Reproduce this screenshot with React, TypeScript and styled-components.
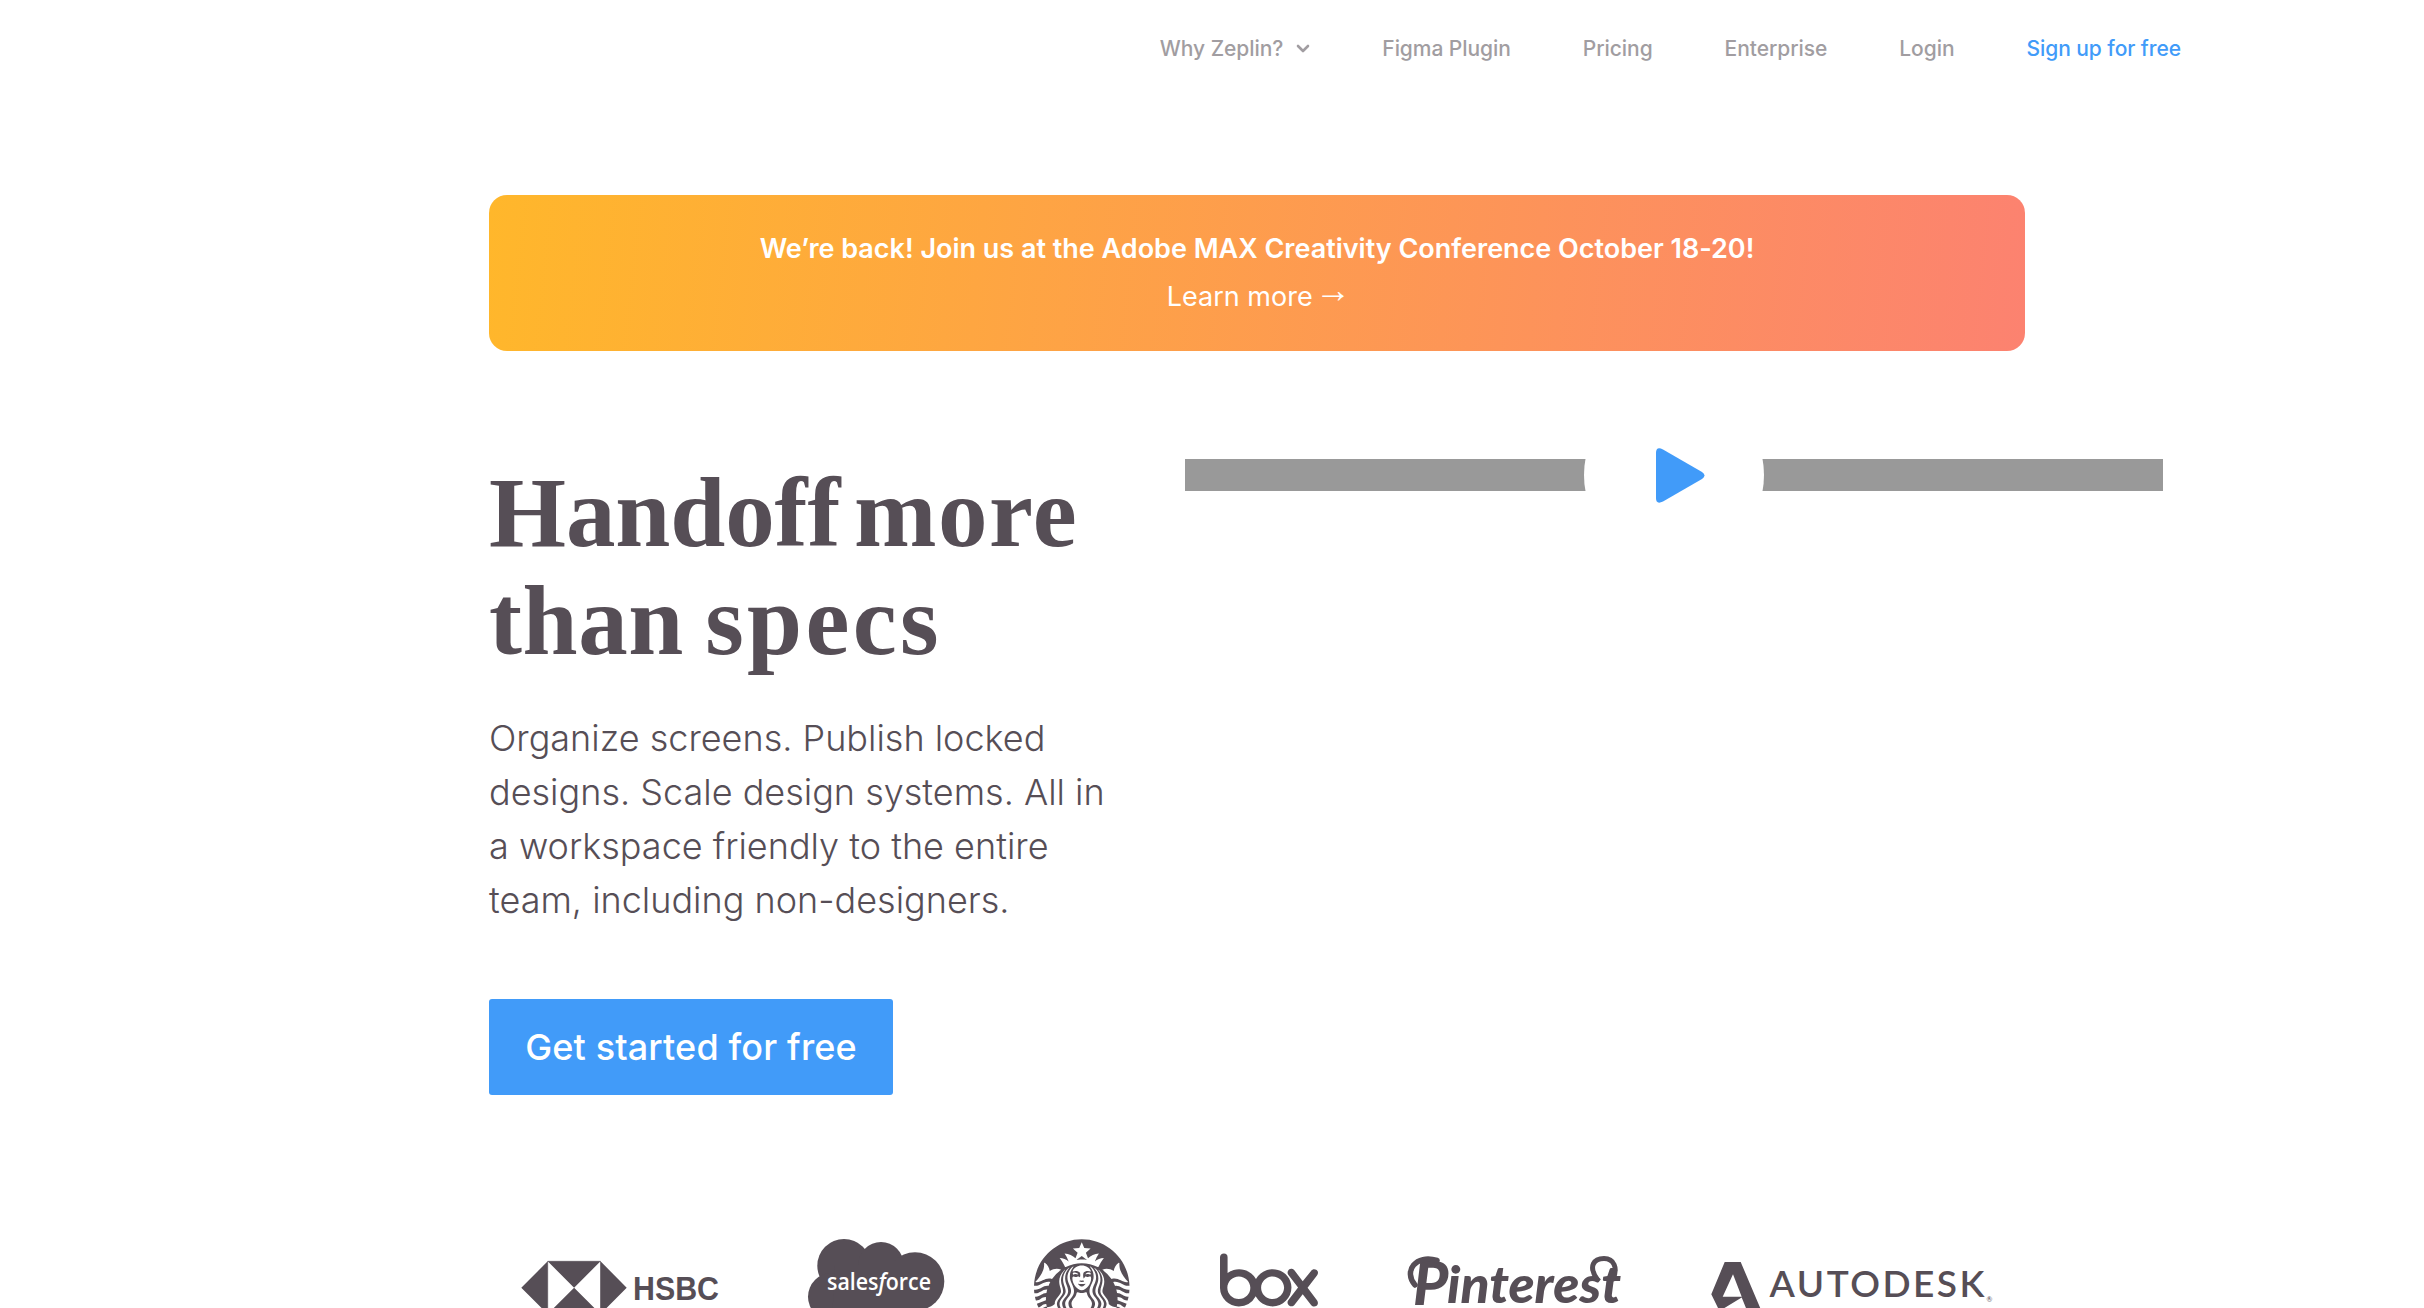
import React from "react";
import styled, { createGlobalStyle } from "styled-components";
import { SiBox, SiStarbucks } from "react-icons/si";

const INK = "#564e56";
const BLUE = "#419bf9";

const GlobalStyle = createGlobalStyle`
  * { box-sizing: border-box; }
  body { margin: 0; background: #fff; font-family: Inter, "Liberation Sans", sans-serif; }
  h1, p { margin: 0; }
  a { text-decoration: none; }
`;

const Page = styled.div`
  height: 1308px;
  overflow: hidden;
  display: flex;
  flex-direction: column;
`;

const Nav = styled.nav`
  height: 96px;
  padding: 2px 243px 0 0;
  display: flex;
  flex: none;
  justify-content: flex-end;
  align-items: center;
  gap: 72px;
`;

const NavLink = styled.a<{ $accent?: boolean }>`
  display: flex;
  align-items: center;
  gap: 13px;
  font-size: 21px;
  line-height: 30px;
  font-weight: 500;
  letter-spacing: -0.06px;
  white-space: nowrap;
  color: ${(p) => (p.$accent ? BLUE : "#a19da1")};
`;

const Chevron = styled.svg`
  width: 14px;
  height: 10px;
`;

const Banner = styled.a`
  margin: 99px 0 0 489px;
  width: 1536px;
  height: 156px;
  flex: none;
  border-radius: 18px;
  background: linear-gradient(96deg, #ffb72b, #fc8270);
  color: #fff;
  display: flex;
  flex-direction: column;
  align-items: center;
  padding-top: 30px;
  font-size: 27px;
  line-height: 48px;
`;

const BannerTitle = styled.span`
  font-weight: 600;
  letter-spacing: -0.01px;
`;

const BannerLink = styled.span`
  font-weight: 400;
`;

const Arrow = styled.span`
  display: inline-block;
  margin: 0 -4px 0 -5px;
  font-family: "Liberation Sans", sans-serif;
  font-size: 36px;
  line-height: 0;
  vertical-align: 4px;
`;

const Hero = styled.section`
  margin-top: 108px;
  padding-left: 489px;
  height: 772px;
  flex: none;
  display: flex;
  align-items: flex-start;
`;

const Copy = styled.div`
  width: 696px;
  flex: none;
`;

const Title = styled.h1`
  font-family: "Liberation Serif", serif;
  font-weight: 700;
  font-size: 99px;
  line-height: 108px;
  color: ${INK};
  white-space: nowrap;
`;

const TitleLine = styled.span<{ $gap: number }>`
  display: block;
  word-spacing: ${(p) => p.$gap}px;
`;

const Word = styled.span<{ $spacing: number }>`
  letter-spacing: ${(p) => p.$spacing}px;
`;

const Lead = styled.p`
  margin-top: 36px;
  width: 640px;
  font-size: 36px;
  line-height: 54px;
  font-weight: 300;
  color: ${INK};
`;

const Button = styled.a`
  margin-top: 72px;
  width: 404px;
  height: 96px;
  border-radius: 3px;
  background: ${BLUE};
  color: #fff;
  font-size: 36px;
  font-weight: 500;
  letter-spacing: 0.15px;
  display: flex;
  align-items: center;
  justify-content: center;
`;

const Video = styled.div`
  width: 978px;
  height: 32px;
  background: #999;
  display: flex;
  align-items: center;
  justify-content: center;
`;

const PlayButton = styled.div`
  width: 180px;
  height: 180px;
  flex: none;
  border-radius: 50%;
  background: #fff;
  display: flex;
  align-items: center;
  padding-left: 72px;
`;

const Logos = styled.section`
  height: 77px;
  padding-left: 521px;
  display: flex;
  align-items: flex-start;
  color: ${INK};
`;

const Logo = styled.div<{ $gap: number; $top: number }>`
  flex: none;
  margin-left: ${(p) => p.$gap}px;
  margin-top: ${(p) => p.$top}px;
  svg { display: block; fill: ${INK}; overflow: visible; }
`;

const links = ["Figma Plugin", "Pricing", "Enterprise", "Login"];

export default function App() {
  return (
    <>
      <GlobalStyle />
      <Page>
        <Nav>
          <NavLink>
            Why Zeplin?
            <Chevron viewBox="0 0 14 10">
              <path d="M2 2l5 5 5-5" fill="none" stroke="#a19da1" strokeWidth="2.6" strokeLinecap="round" strokeLinejoin="round" />
            </Chevron>
          </NavLink>
          {links.map((l) => (
            <NavLink key={l}>{l}</NavLink>
          ))}
          <NavLink $accent>Sign up for free</NavLink>
        </Nav>
        <Banner>
          <BannerTitle>We’re back! Join us at the Adobe MAX Creativity Conference October 18-20!</BannerTitle>
          <BannerLink>
            Learn more <Arrow>→</Arrow>
          </BannerLink>
        </Banner>
        <Hero>
          <Copy>
            <Title>
              <TitleLine $gap={-11}>
                <Word $spacing={-0.1}>Handoff</Word> <Word $spacing={1.5}>more</Word>
              </TitleLine>
              <TitleLine $gap={-3.5}>
                <Word $spacing={0.6}>than</Word> <Word $spacing={3.3}>specs</Word>
              </TitleLine>
            </Title>
            <Lead>
              Organize screens. Publish locked
              <br />
              designs. Scale design systems. All in
              <br />a workspace friendly to the entire
              <br />
              team, including non-designers.
            </Lead>
            <Button>Get started for free</Button>
          </Copy>
          <Video>
            <PlayButton>
              <svg width="49" height="55" viewBox="0 0 49 55">
                <path d="M0 5Q0-2 7 1.500L46 24Q51 27.500 46 31L7 53.500Q0 57 0 50Z" fill={BLUE} />
              </svg>
            </PlayButton>
          </Video>
        </Hero>
        <Logos>
          <Logo $gap={0} $top={30}>
            <svg width="199" height="54" viewBox="521 1261 199 54">
              <path d="M521.300 1287.700L547.700 1261.300V1314.100ZM626.700 1287.700L600.500 1261.300V1314.100ZM547.700 1261.300H600.500L574.100 1287.700ZM547.700 1314.100H600.500L574.100 1287.700Z" />
              <path d="M547.700 1261.300H600.500V1314.100H547.700Z" fill="none" stroke={INK} strokeWidth=".6" />
              <text x="633" y="1300" fontFamily="Liberation Sans" fontWeight="700" fontSize="33" textLength="86" lengthAdjust="spacingAndGlyphs">HSBC</text>
            </svg>
          </Logo>
          <Logo $gap={88} $top={8}>
            <svg width="136" height="95" viewBox="808 1239 136 95">
              <circle cx="844" cy="1265.700" r="26.700" />
              <circle cx="881" cy="1264.700" r="22.700" />
              <circle cx="915" cy="1281.500" r="29.300" />
              <circle cx="831.700" cy="1296.700" r="23.700" />
              <path d="M835 1265H915V1308L880 1325L832 1320Z" />
              <text x="827" y="1289.500" fill="#fff" fontFamily="Open Sans" fontWeight="600" fontSize="23" textLength="104" lengthAdjust="spacingAndGlyphs">sales<tspan fontStyle="italic">f</tspan>orce</text>
            </svg>
          </Logo>
          <Logo $gap={90.3} $top={8}>
            <SiStarbucks size={95.5} />
          </Logo>
          <Logo $gap={90.2} $top={0.4}>
            <SiBox size={98} />
          </Logo>
          <Logo $gap={90} $top={22}>
            <svg width="212" height="60" viewBox="1408 1253 212 60">
              <text fontFamily="Lato" fontWeight="900" fontStyle="italic">
                <tspan x="1413" y="1305" fontSize="60">P</tspan>
                <tspan x="1447" y="1303" fontSize="51" textLength="174" lengthAdjust="spacingAndGlyphs">interest</tspan>
              </text>
              <path d="M1415 1285C1403 1271 1416 1254 1437 1260.500" fill="none" stroke={INK} strokeWidth="5.500" strokeLinecap="round" />
              <path d="M1597 1279C1588 1266 1594 1258.500 1604 1258.500S1618 1268 1613 1279" fill="none" stroke={INK} strokeWidth="5" strokeLinecap="round" />
            </svg>
          </Logo>
          <Logo $gap={91} $top={31}>
            <svg width="284" height="52" viewBox="1711 1262 284 52">
              <path d="M1724.700 1262H1740.700L1761.500 1311H1747.200L1741.700 1297.500L1719.500 1311L1711.300 1294.300ZM1733 1274.300L1722.700 1296.700H1741.700Z" fillRule="evenodd" />
              <text x="1769.500" y="1296.700" fontFamily="Lato" fontWeight="600" fontSize="37" textLength="215" lengthAdjust="spacing">AUTODESK</text>
              <text x="1986.500" y="1301.500" fontFamily="Lato" fontSize="7">®</text>
            </svg>
          </Logo>
        </Logos>
      </Page>
    </>
  );
}
